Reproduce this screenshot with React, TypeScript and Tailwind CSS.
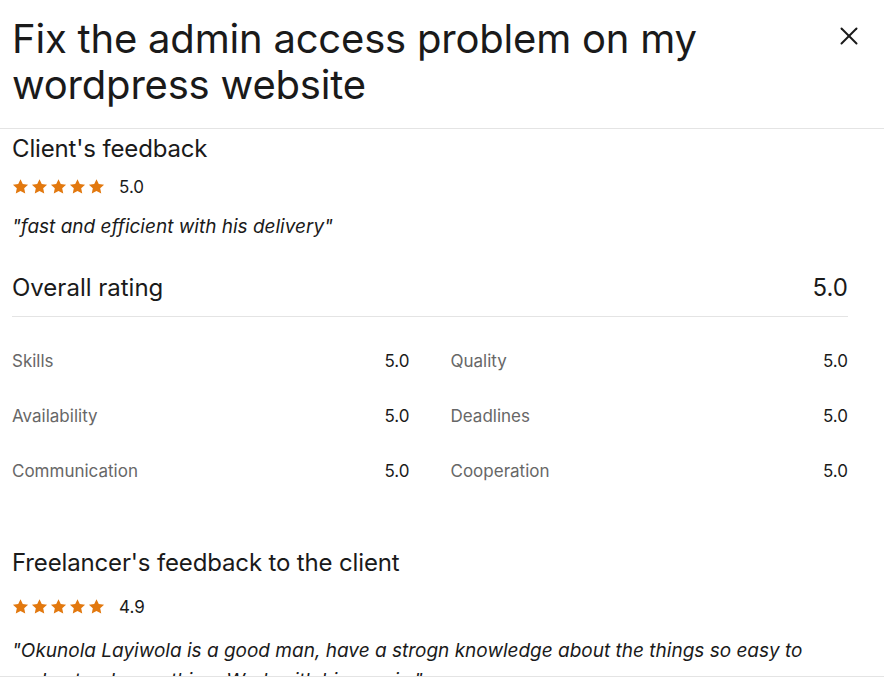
import { X } from 'lucide-react'

const font = { fontFamily: 'Inter, "Liberation Sans", Arial, sans-serif' }

function Stars() {
  return (
    <div className="flex items-center gap-[2px]">
      {[0, 1, 2, 3, 4].map((i) => (
        <svg key={i} width="17" height="17" viewBox="0 0 24 24" className="text-[#e2780e]">
          <path
            fill="currentColor"
            d="M12 1.6l3.2 6.9 7.5.9-5.5 5.1 1.5 7.4L12 18.2l-6.7 3.7 1.5-7.4L1.3 9.4l7.5-.9z"
          />
        </svg>
      ))}
    </div>
  )
}

const ratings = [
  ['Skills', '5.0'],
  ['Quality', '5.0'],
  ['Availability', '5.0'],
  ['Deadlines', '5.0'],
  ['Communication', '5.0'],
  ['Cooperation', '5.0'],
]

export default function App() {
  return (
    <div className="h-[687px] w-[884px] overflow-hidden bg-white text-[#1a1a1a] flex flex-col" style={font}>
      {/* header */}
      <div className="flex items-start justify-between border-b border-[#e4e4e4] pl-3 pr-5 pt-[16px] pb-[20px]">
        <h1 className="text-[40px] leading-[46px] font-normal tracking-[-0.2px] w-[740px]">
          Fix the admin access problem on my wordpress website
        </h1>
        <button className="mt-[5px] text-[#1a1a1a]">
          <X size={30} strokeWidth={1.6} />
        </button>
      </div>

      {/* body */}
      <div className="h-[547px] overflow-hidden pl-3 pr-9 pt-[4px]">
        <h2 className="text-[24px] leading-[32px] tracking-[-0.15px]">Client's feedback</h2>
        <div className="mt-[13px] flex items-center gap-[14px]">
          <Stars />
          <span className="text-[17px] leading-[16px]">5.0</span>
        </div>
        <p className="mt-[20px] text-[19px] leading-[24px] italic">"fast and efficient with his delivery"</p>

        <div className="mt-[33px] flex items-center justify-between border-b border-[#e4e4e4] pb-[12px]">
          <span className="text-[24px] leading-[32px]">Overall rating</span>
          <span className="text-[24px] leading-[32px]">5.0</span>
        </div>

        <div className="mt-[32px] grid grid-cols-2 gap-x-[41px] gap-y-[31px]">
          {ratings.map(([label, value]) => (
            <div key={label} className="flex items-center justify-between text-[17px] leading-[24px]">
              <span className="text-[#676767]">{label}</span>
              <span>{value}</span>
            </div>
          ))}
        </div>

        <h2 className="mt-[64px] text-[24px] leading-[32px] tracking-[-0.15px]">Freelancer's feedback to the client</h2>
        <div className="mt-[19px] flex items-center gap-[14px]">
          <Stars />
          <span className="text-[17px] leading-[16px]">4.9</span>
        </div>
        <p className="mt-[21px] text-[19px] leading-[30px] italic pr-4">
          "Okunola Layiwola is a good man, have a strogn knowledge about the things so easy to understand
          everything. Work with him again."
        </p>
      </div>

      {/* footer */}
      <div className="flex-1 border-t border-[#e4e4e4]" />
    </div>
  )
}
